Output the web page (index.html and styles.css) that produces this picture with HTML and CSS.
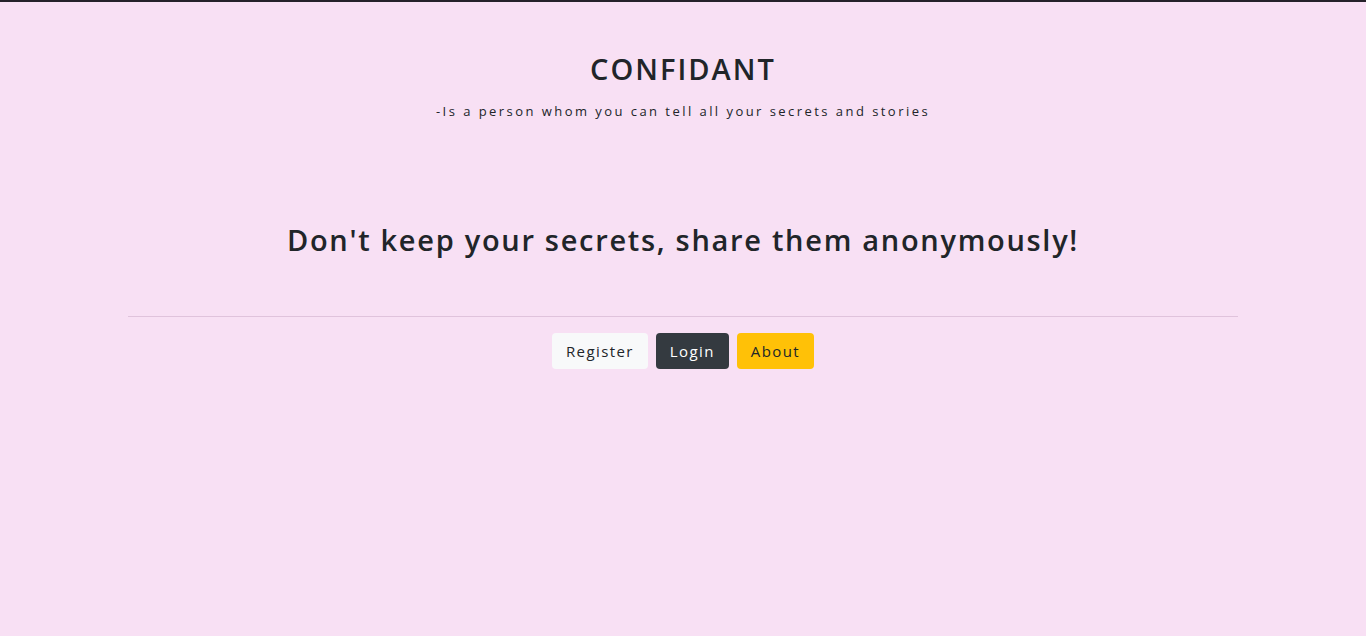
FILE: index.html
```html
<!DOCTYPE html>
<html>
<head>
<meta charset="utf-8">
<link rel="stylesheet" href="styles.css">
</head>
<body>
<div class="page">
  <header class="brand">
    <h1 class="brand-title">CONFIDANT</h1>
    <p class="brand-sub">-Is a person whom you can tell all your secrets and stories</p>
  </header>
  <main class="hero">
    <h2 class="hero-title">Don't keep your secrets, share them anonymously!</h2>
    <hr class="divider">
    <div class="actions">
      <a class="btn btn-light">Register</a>
      <a class="btn btn-dark">Login</a>
      <a class="btn btn-warning">About</a>
    </div>
  </main>
</div>
</body>
</html>
```
FILE: styles.css
```css
html, body { margin: 0; padding: 0; }
body {
  background: #f8e0f4;
  border-top: 2px solid #25212a;
  font-family: "Open Sans", "Noto Sans", sans-serif;
  color: #212529;
  min-height: 634px;
}
.page { display: flex; flex-direction: column; align-items: center; }
.brand { text-align: center; padding-top: 48px; }
.brand-title {
  margin: 0;
  font-size: 29px;
  font-weight: 600;
  letter-spacing: 2px;
  line-height: 38px;
  color: #212529;
}
.brand-sub {
  margin: 13px 0 0;
  font-size: 13px;
  letter-spacing: 2.45px;
  line-height: 20px;
}
.hero { width: 1110px; text-align: center; padding-top: 97px; }
.hero-title {
  margin: 0;
  font-size: 29px;
  font-weight: 600;
  letter-spacing: 1.7px;
  line-height: 44px;
}
.divider {
  margin: 54px 0 16px;
  border: 0;
  border-top: 1px solid #e0c3dc;
}
.actions { display: flex; justify-content: center; gap: 8px; }
.btn {
  display: inline-block;
  height: 36px;
  line-height: 36px;
  padding: 0 14px;
  border-radius: 4px;
  font-size: 15px;
  letter-spacing: 1.4px;
  box-sizing: border-box;
}
.btn-light { background: #f8f9fa; color: #212529; }
.btn-dark { background: #343a40; color: #fff; }
.btn-warning { background: #ffc107; color: #212529; }
```
